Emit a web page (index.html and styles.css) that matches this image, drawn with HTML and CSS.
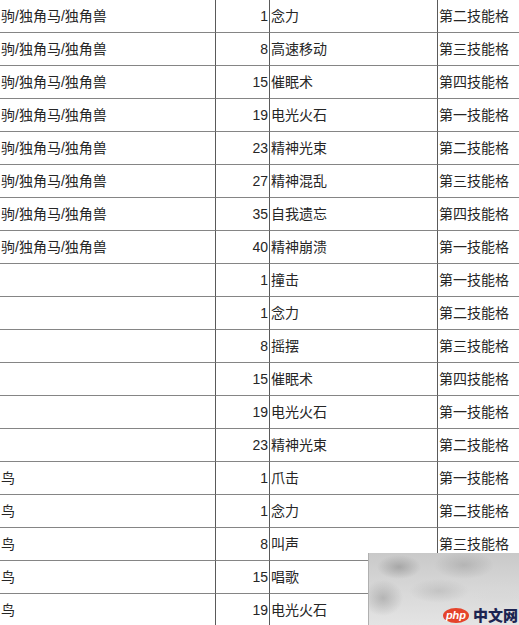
FILE: index.html
```html
<!DOCTYPE html>
<html lang="zh">
<head>
<meta charset="utf-8">
<link rel="stylesheet" href="styles.css">
</head>
<body>
<table class="moves">
<tbody>
<tr><td class="pet">驹/独角马/独角兽</td><td class="lv">1</td><td class="skill">念力</td><td class="slot">第二技能格</td></tr>
<tr><td class="pet">驹/独角马/独角兽</td><td class="lv">8</td><td class="skill">高速移动</td><td class="slot">第三技能格</td></tr>
<tr><td class="pet">驹/独角马/独角兽</td><td class="lv">15</td><td class="skill">催眠术</td><td class="slot">第四技能格</td></tr>
<tr><td class="pet">驹/独角马/独角兽</td><td class="lv">19</td><td class="skill">电光火石</td><td class="slot">第一技能格</td></tr>
<tr><td class="pet">驹/独角马/独角兽</td><td class="lv">23</td><td class="skill">精神光束</td><td class="slot">第二技能格</td></tr>
<tr><td class="pet">驹/独角马/独角兽</td><td class="lv">27</td><td class="skill">精神混乱</td><td class="slot">第三技能格</td></tr>
<tr><td class="pet">驹/独角马/独角兽</td><td class="lv">35</td><td class="skill">自我遗忘</td><td class="slot">第四技能格</td></tr>
<tr><td class="pet">驹/独角马/独角兽</td><td class="lv">40</td><td class="skill">精神崩溃</td><td class="slot">第一技能格</td></tr>
<tr><td class="pet"></td><td class="lv">1</td><td class="skill">撞击</td><td class="slot">第一技能格</td></tr>
<tr><td class="pet"></td><td class="lv">1</td><td class="skill">念力</td><td class="slot">第二技能格</td></tr>
<tr><td class="pet"></td><td class="lv">8</td><td class="skill">摇摆</td><td class="slot">第三技能格</td></tr>
<tr><td class="pet"></td><td class="lv">15</td><td class="skill">催眠术</td><td class="slot">第四技能格</td></tr>
<tr><td class="pet"></td><td class="lv">19</td><td class="skill">电光火石</td><td class="slot">第一技能格</td></tr>
<tr><td class="pet"></td><td class="lv">23</td><td class="skill">精神光束</td><td class="slot">第二技能格</td></tr>
<tr><td class="pet">鸟</td><td class="lv">1</td><td class="skill">爪击</td><td class="slot">第一技能格</td></tr>
<tr><td class="pet">鸟</td><td class="lv">1</td><td class="skill">念力</td><td class="slot">第二技能格</td></tr>
<tr><td class="pet">鸟</td><td class="lv">8</td><td class="skill">叫声</td><td class="slot">第三技能格</td></tr>
<tr><td class="pet">鸟</td><td class="lv">15</td><td class="skill">唱歌</td><td class="slot"></td></tr>
<tr><td class="pet">鸟</td><td class="lv">19</td><td class="skill">电光火石</td><td class="slot"></td></tr>
</tbody>
</table>
<div class="watermark">
  <div class="logo"><span class="php">php</span><span class="cn">中文网</span></div>
</div>
</body>
</html>
```
FILE: styles.css
```css
html, body {
  margin: 0;
  padding: 0;
  background: #ffffff;
  overflow: hidden;
  height: 625px;
}
body {
  font-family: "Liberation Sans", "Noto Sans CJK SC", sans-serif;
  font-size: 14px;
  color: #262626;
  position: relative;
}
.moves {
  border-collapse: separate;
  border-spacing: 0;
  table-layout: fixed;
  width: 519px;
}
.moves td {
  box-sizing: border-box;
  height: 33px;
  padding: 0;
  border-right: 1px solid #5a5a5a;
  border-bottom: 1px solid #858585;
  vertical-align: middle;
  white-space: nowrap;
  overflow: hidden;
  line-height: 16px;
}
.pet { width: 216px; }
.moves td.pet { padding-left: 1px; }
.lv { width: 54px; text-align: right; }
.moves td.lv { padding-right: 1px; }
.skill { width: 168px; }
.moves td.skill { padding-left: 1px; }
.slot { width: 81px; }
.moves td.slot { padding-left: 1px; border-right: none; }

.watermark {
  position: absolute;
  left: 368px;
  top: 553px;
  width: 151px;
  height: 72px;
  background:
    radial-gradient(ellipse 22px 12px at 30px 14px, rgba(140,140,140,0.6), transparent),
    radial-gradient(ellipse 30px 14px at 95px 12px, rgba(160,160,160,0.55), transparent),
    radial-gradient(ellipse 20px 18px at 14px 45px, rgba(150,150,150,0.55), transparent),
    radial-gradient(ellipse 30px 12px at 70px 38px, rgba(175,175,175,0.5), transparent),
    radial-gradient(ellipse 30px 12px at 130px 40px, rgba(215,215,215,0.6), transparent),
    linear-gradient(180deg, #c9c9c9 0%, #d6d6d6 45%, #e4e4e4 100%);
  border-left: 1px solid #b0b0b0;
}
.logo {
  position: absolute;
  right: 2px;
  bottom: 1px;
  display: flex;
  align-items: center;
  gap: 4px;
}
.php {
  display: inline-block;
  background: #e5432b;
  color: #ffffff;
  font-family: "Liberation Sans", sans-serif;
  font-style: italic;
  font-weight: bold;
  font-size: 11px;
  line-height: 15px;
  width: 26px;
  border-radius: 50%;
  text-align: center;
}
.cn {
  font-family: "Noto Sans CJK SC", sans-serif;
  font-weight: 900;
  font-size: 15px;
  line-height: 18px;
  color: #1c2452;
}
```
